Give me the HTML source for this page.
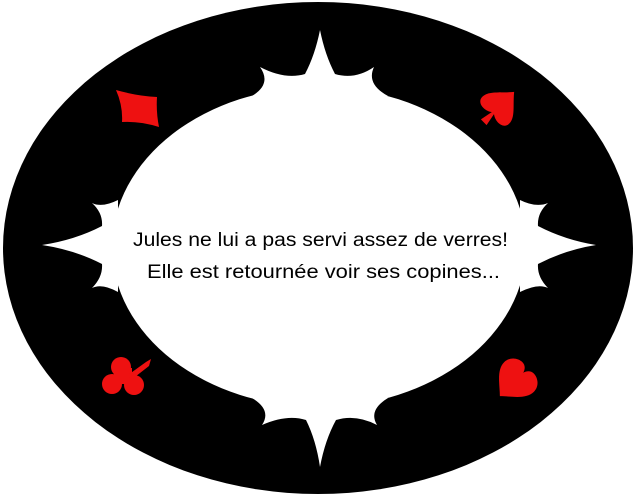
<!DOCTYPE html>
<html><head><meta charset="utf-8"><style>
html,body{margin:0;padding:0;background:#fff;width:636px;height:496px;overflow:hidden}
svg{display:block}
</style></head><body>
<svg width="636" height="496" viewBox="0 0 636 496" xmlns="http://www.w3.org/2000/svg">
<ellipse cx="318" cy="248" rx="315" ry="246" fill="#000"/>
<g fill="#fff">
<ellipse cx="319" cy="247" rx="207" ry="160"/>
<path d="M252 96 Q272 84 260 67 Q285 80 305 74 Q315 55 320 30 Q325 55 335 74 Q355 80 374 67 Q366 84 388 96 Z"/>
<path d="M252 398 Q272 410 262 425 Q287 414 306 420 Q316 440 320 467 Q325 440 336 420 Q356 414 377 425 Q368 410 388 398 Z"/>
<path d="M118 200 Q102 208 92 203 Q103 213 102 226 Q75 240 42 245 Q75 250 102 264 Q103 277 92 288 Q102 283 118 292 Z"/>
<path d="M520 200 Q536 208 548 203 Q537 213 538 226 Q565 240 596 245 Q565 250 538 264 Q537 277 548 288 Q538 283 520 292 Z"/>
</g>
<g fill="#ee1111">
<path d="M116 90 Q137 96 157 97 Q156 112 159 127 Q140 121 122 122 Q123 106 116 90 Z"/>
<path transform="translate(500,106) rotate(45)" d="M0,-20 C9,-9 19,-3 19,6 C19,14 8,15 1.5,10 L4,23 L-4,23 L-1.5,10 C-8,15 -19,14 -19,6 C-19,-3 -9,-9 0,-20 Z"/>
<circle cx="121" cy="367" r="10"/>
<circle cx="112" cy="384" r="10"/>
<circle cx="134" cy="385" r="10"/>
<rect x="114" y="368" width="18" height="16"/>
<path d="M128 375 L146 362 L151 359 L149 366 L131 380 Z"/>
<path transform="translate(514,382) rotate(45)" d="M0,20 C-8,12 -21,4 -21,-7 C-21,-15 -14,-20 -8,-20 C-4,-20 -1,-17 0,-13 C1,-17 4,-20 8,-20 C14,-20 21,-15 21,-7 C21,4 8,12 0,20 Z"/>
</g>
<g font-family="'Liberation Sans', sans-serif" font-size="19" fill="#000">
<text x="133" y="246" textLength="375" lengthAdjust="spacingAndGlyphs">Jules ne lui a pas servi assez de verres!</text>
<text x="147" y="278" textLength="353" lengthAdjust="spacingAndGlyphs">Elle est retournée voir ses copines...</text>
</g>
</svg>
</body></html>
